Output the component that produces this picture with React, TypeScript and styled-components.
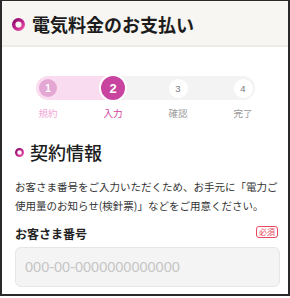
import React from "react";
import styled, { createGlobalStyle } from "styled-components";

const Global = createGlobalStyle`
  html, body { margin: 0; padding: 0; background: #ffffff; }
  body { font-family: "Noto Sans CJK JP", "Noto Sans", sans-serif; }
  * { box-sizing: border-box; }
`;

const Frame = styled.div`
  width: 290px;
  height: 296px;
  border-style: solid;
  border-color: #2a2a2a;
  border-width: 1px 2px 2px 2px;
  background: #ffffff;
  overflow: hidden;
  display: flex;
  flex-direction: column;
`;

const Header = styled.header`
  height: 46px;
  flex: none;
  background: #f7f6f2;
  border-bottom: 2px solid #eeece7;
  display: flex;
  align-items: center;
  gap: 7px;
  padding: 2px 0 0 10px;
`;

const Title = styled.h1`
  margin: 0;
  font-size: 18px;
  font-weight: 700;
  color: #1c1c1c;
  line-height: 24px;
`;

const Body = styled.main`
  padding: 0 10px 0 11px;
  display: flex;
  flex-direction: column;
`;

const Stepper = styled.div`
  margin: 29px 0 0 23px;
  width: 219px;
  display: flex;
  flex-direction: column;
  gap: 7px;
`;

const Track = styled.div`
  height: 24px;
  border-radius: 12px;
  background: linear-gradient(to right, #fadcf0 0, #fadcf0 77px, #f3f3f3 77px);
  display: flex;
  align-items: center;
  gap: 47px;
  padding: 0 3px;
`;

const LabelRow = styled.div`
  display: flex;
  gap: 47px;
  padding: 0 3px;
`;

const Slot = styled.div`
  width: 18px;
  flex: none;
  display: flex;
  justify-content: center;
  align-items: center;
`;

type StepState = "done" | "current" | "todo";

const Circle = styled.div<{ $state: StepState }>`
  flex: none;
  border-radius: 50%;
  display: flex;
  align-items: center;
  justify-content: center;
  font-family: "Liberation Sans", Arial, sans-serif;
  ${({ $state }) =>
    $state === "done"
      ? `width: 18px; height: 18px; background: #e4a6d3; color: #fff; font-size: 10px; font-weight: 700;`
      : $state === "current"
      ? `width: 28px; height: 28px; background: #c8449f; border: 2.5px solid #fff; color: #fff; font-size: 13px; font-weight: 700;`
      : `width: 19px; height: 19px; background: #ffffff; color: #7a7a7a; font-size: 9.5px; font-weight: 400;`}
`;

const StepLabel = styled.span<{ $state: StepState }>`
  white-space: nowrap;
  font-size: 9.5px;
  line-height: 13px;
  color: ${({ $state }) =>
    $state === "done" ? "#f0a6d5" : $state === "current" ? "#d2409e" : "#9b9b9b"};
`;

const SectionHead = styled.h2`
  margin: 20px 0 0 2px;
  display: flex;
  align-items: center;
  gap: 6px;
  font-size: 18px;
  font-weight: 500;
  line-height: 24px;
  color: #1c1c1c;
`;

const Lead = styled.p`
  margin: 14px 0 0 2px;
  font-size: 10.5px;
  line-height: 18.5px;
  color: #333;
`;

const FieldHead = styled.div`
  margin-top: 11px;
  display: flex;
  align-items: center;
  justify-content: space-between;
  padding-left: 2px;
`;

const FieldLabel = styled.label`
  font-size: 12px;
  font-weight: 700;
  line-height: 16px;
  color: #222;
`;

const Required = styled.span`
  border: 1px solid #ea4760;
  border-radius: 3px;
  color: #ea4760;
  font-size: 8px;
  line-height: 10px;
  padding: 0 2px;
  margin-top: -5px;
`;

const Input = styled.input`
  margin-top: 5px;
  margin-left: 2px;
  width: 265px;
  height: 40px;
  border: 1px solid #e6e6e6;
  border-radius: 6px;
  background: #f4f4f4;
  padding: 0 9px;
  font-family: "Liberation Sans", Arial, sans-serif;
  font-size: 14.5px;
  color: #333;
  outline: none;
  &::placeholder { color: #c6c6c6; }
`;

const Ring = ({ size, stroke, id }: { size: number; stroke: number; id: string }) => (
  <svg width={size} height={size} viewBox={`0 0 ${size} ${size}`} style={{ flex: "none" }}>
    <defs>
      <linearGradient id={id} x1="0" y1="0" x2="1" y2="1">
        <stop offset="0" stopColor="#8c0d6b" />
        <stop offset="0.55" stopColor="#c3228c" />
        <stop offset="1" stopColor="#ea5aa8" />
      </linearGradient>
    </defs>
    <circle
      cx={size / 2}
      cy={size / 2}
      r={(size - stroke) / 2}
      fill="none"
      stroke={`url(#${id})`}
      strokeWidth={stroke}
    />
  </svg>
);

const steps: { n: string; label: string; state: StepState }[] = [
  { n: "1", label: "規約", state: "done" },
  { n: "2", label: "入力", state: "current" },
  { n: "3", label: "確認", state: "todo" },
  { n: "4", label: "完了", state: "todo" },
];

export default function App() {
  return (
    <>
      <Global />
      <Frame>
        <Header>
          <Ring size={13} stroke={3.4} id="g1" />
          <Title>電気料金のお支払い</Title>
        </Header>
        <Body>
          <Stepper>
            <Track>
              {steps.map((s) => (
                <Slot key={s.n}>
                  <Circle $state={s.state}>{s.n}</Circle>
                </Slot>
              ))}
            </Track>
            <LabelRow>
              {steps.map((s) => (
                <Slot key={s.n}>
                  <StepLabel $state={s.state}>{s.label}</StepLabel>
                </Slot>
              ))}
            </LabelRow>
          </Stepper>
          <SectionHead>
            <Ring size={9} stroke={2.2} id="g2" />
            契約情報
          </SectionHead>
          <Lead>
            お客さま番号をご入力いただくため、お手元に「電力ご使用量のお知らせ(検針票)」などをご用意ください。
          </Lead>
          <FieldHead>
            <FieldLabel>お客さま番号</FieldLabel>
            <Required>必須</Required>
          </FieldHead>
          <Input placeholder="000-00-0000000000000" />
        </Body>
      </Frame>
    </>
  );
}
